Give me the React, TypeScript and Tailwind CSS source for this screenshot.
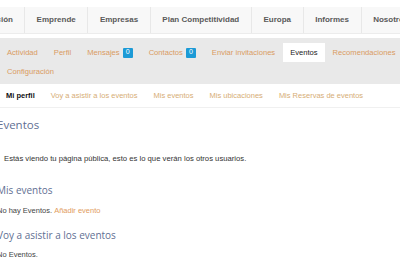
const navItems = ['Emprende', 'Empresas', 'Plan Competitividad', 'Europa', 'Informes', 'Nosotros']

const tabs = [
  { label: 'Actividad' },
  { label: 'Perfil' },
  { label: 'Mensajes', badge: '0' },
  { label: 'Contactos', badge: '0' },
  { label: 'Enviar invitaciones' },
  { label: 'Eventos', active: true },
  { label: 'Recomendaciones' },
]

const subnav = ['Voy a asistir a los eventos', 'Mis eventos', 'Mis ubicaciones', 'Mis Reservas de eventos']

export default function App() {
  return (
    <div className="w-[400px] h-[260px] overflow-hidden bg-white font-['Liberation_Sans',Arial,sans-serif]">
      {/* top nav */}
      <div className="mt-[7px] h-[27px] bg-[#f8f8f8] border-b border-[#ececec] flex items-stretch whitespace-nowrap overflow-hidden">
        <div className="w-[25px] shrink-0 flex justify-end items-center overflow-hidden border-r border-[#e8e8e8] pr-[11px]">
          <span className="text-[8px] font-bold text-[#5a5a5a]">Formación</span>
        </div>
        {navItems.map((item) => (
          <div key={item} className="shrink-0 flex items-center px-[11.6px] border-r border-[#e8e8e8]">
            <span className="text-[8px] font-bold text-[#5a5a5a]">{item}</span>
          </div>
        ))}
      </div>

      {/* tabs */}
      <div className="mt-[4px] h-[46px] bg-[#e9e9e9] pt-[5px] whitespace-nowrap overflow-hidden">
        <div className="flex items-center h-[19px] -ml-[1px]">
          {tabs.map((t) => (
            <div
              key={t.label}
              className={
                t.active
                  ? 'shrink-0 h-[19px] flex items-center px-[7px] bg-white text-[7.6px] text-[#222]'
                  : 'shrink-0 h-[19px] flex items-center px-[8px] text-[7.6px] text-[#d99b62]'
              }
            >
              {t.label}
              {t.badge && (
                <span className="ml-[3px] w-[10px] h-[10px] rounded-[1px] bg-[#1c9ad6] text-white text-[7px] flex items-center justify-center">
                  {t.badge}
                </span>
              )}
            </div>
          ))}
        </div>
        <div className="flex items-center h-[19px] -ml-[1px]">
          <div className="px-[8px] text-[7.6px] text-[#d99b62]">Configuración</div>
        </div>
      </div>

      {/* sub nav */}
      <div className="h-[24px] bg-white border-b border-[#f0f0f0] flex items-center whitespace-nowrap -ml-[2px]">
        <div className="px-[8px] text-[7.5px] font-bold text-[#111]">Mi perfil</div>
        {subnav.map((s) => (
          <div key={s} className="px-[8px] text-[7.5px] text-[#d6ad76]">{s}</div>
        ))}
      </div>

      {/* content */}
      <div className="-ml-[3px] flex flex-col whitespace-nowrap">
        <div className="h-[34px] flex items-center font-['Open_Sans',sans-serif] text-[11.5px] text-[#5f6f93]">Eventos</div>
        <div className="h-[34px] flex items-center pl-[7px] text-[7.7px] text-[#333]">
          Estás viendo tu página pública, esto es lo que verán los otros usuarios.
        </div>
        <div className="h-[28px] flex items-center font-['Open_Sans',sans-serif] text-[10px] text-[#5f6f93]">Mis eventos</div>
        <div className="h-[14px] flex items-center text-[7.5px] text-[#444]">
          No hay Eventos.&nbsp;<span className="text-[#df9c5e]">Añadir evento</span>
        </div>
        <div className="mt-[3px] h-[28px] flex items-center font-['Open_Sans',sans-serif] text-[10px] text-[#5f6f93]">Voy a asistir a los eventos</div>
        <div className="h-[12px] flex items-center text-[7.5px] text-[#444]">No Eventos.</div>
      </div>
    </div>
  )
}
